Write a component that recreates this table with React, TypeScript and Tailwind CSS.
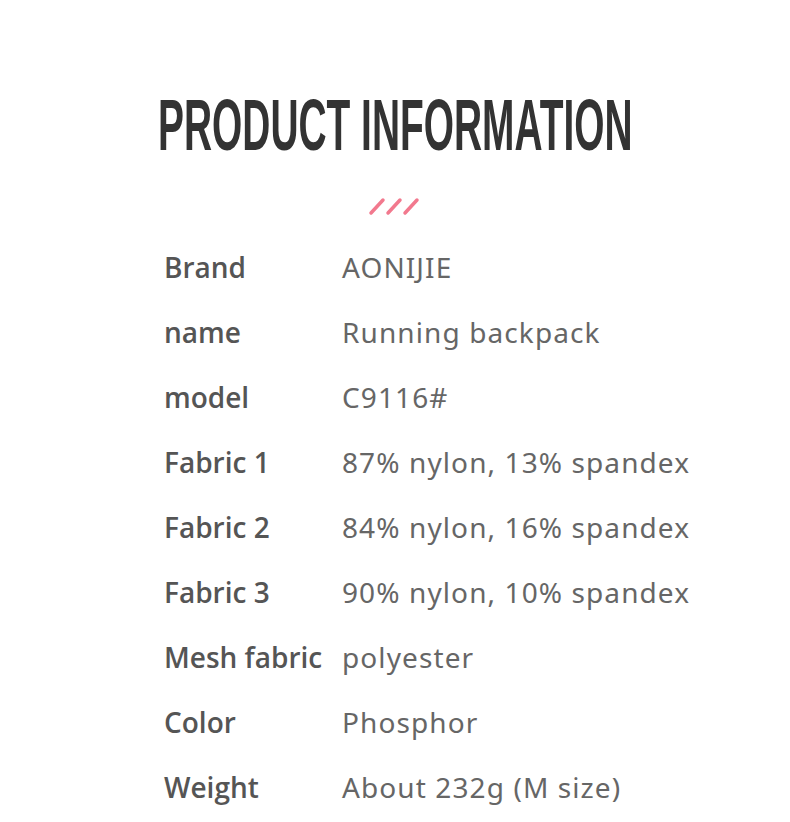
const rows: [string, string][] = [
  ["Brand", "AONIJIE"],
  ["name", "Running backpack"],
  ["model", "C9116#"],
  ["Fabric 1", "87% nylon, 13% spandex"],
  ["Fabric 2", "84% nylon, 16% spandex"],
  ["Fabric 3", "90% nylon, 10% spandex"],
  ["Mesh fabric", "polyester"],
  ["Color", "Phosphor"],
  ["Weight", "About 232g (M size)"],
];

const Slashes = () => (
  <svg width="54" height="19" viewBox="0 0 54 19">
    {[0, 17, 34].map((x) => (
      <line
        key={x}
        x1={x + 3}
        y1={16}
        x2={x + 15}
        y2={3}
        stroke="#f2798e"
        strokeWidth="3.5"
        strokeLinecap="round"
      />
    ))}
  </svg>
);

export default function App() {
  return (
    <div className="w-[790px] h-[822px] bg-white overflow-hidden flex flex-col items-center">
      <h1 className="mt-[88px] h-[74px] flex items-center justify-center text-[72px] leading-none font-bold text-[#333] font-['Liberation_Sans_Narrow','Liberation_Sans',sans-serif] scale-x-[0.54] whitespace-nowrap">
        PRODUCT INFORMATION
      </h1>
      <div className="mt-[35px] flex justify-center">
        <Slashes />
      </div>
      <div className="mt-[18px] w-full pl-[164px] flex flex-col">
        {rows.map(([k, v]) => (
          <div key={k} className="h-[65px] flex items-center">
            <div className="w-[178px] text-[28px] font-semibold text-[#555] font-['Open_Sans',sans-serif] whitespace-nowrap">
              {k}
            </div>
            <div className="text-[28px] text-[#666] font-['Noto_Sans',sans-serif] tracking-[1.1px] whitespace-nowrap">
              {v}
            </div>
          </div>
        ))}
      </div>
    </div>
  );
}
